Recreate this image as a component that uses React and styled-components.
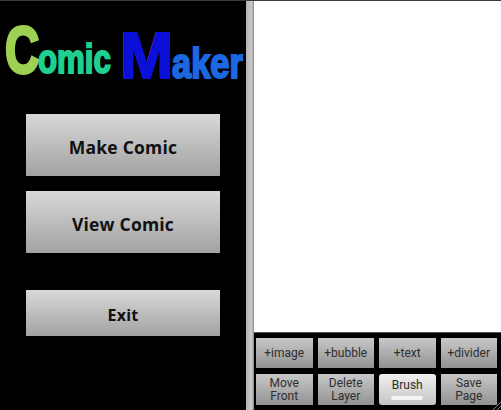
import React from 'react';
import styled, { createGlobalStyle } from 'styled-components';

const GlobalStyle = createGlobalStyle`
  html, body {
    margin: 0;
    padding: 0;
    background: #000;
  }
`;

const Screen = styled.div`
  display: flex;
  width: 501px;
  height: 410px;
  overflow: hidden;
  box-sizing: border-box;
  border-top: 1px solid #3a3a3a;
  font-family: "Open Sans", "Noto Sans", sans-serif;
`;

const MenuPane = styled.div`
  width: 246px;
  flex-shrink: 0;
  background: #000;
  display: flex;
  flex-direction: column;
`;

const Logo = styled.div`
  height: 112px;
  padding-left: 5px;
  padding-top: 16px;
  box-sizing: border-box;
  display: flex;
  align-items: baseline;
  font-family: "Liberation Sans", Arial, sans-serif;
  font-weight: 700;
  line-height: 1;
  white-space: nowrap;
`;

const Letter = styled.span`
  display: inline-block;
  width: ${p => p.w}px;
  font-size: ${p => p.size}px;
  color: ${p => p.color};
  -webkit-text-stroke: ${p => p.stroke}px ${p => p.color};
  text-shadow: ${p => p.shadow || 'none'};
  transform: scaleX(${p => p.sx || 1});
  transform-origin: left center;
  position: relative;
  top: ${p => p.drop || 0}px;
`;

const MenuButton = styled.div`
  margin: ${p => p.top}px 26px 0;
  height: ${p => p.h}px;
  box-sizing: border-box;
  padding-top: 3px;
  display: flex;
  align-items: center;
  justify-content: center;
  background: linear-gradient(#d8d8d8, #a2a2a2);
  color: #111;
  font-size: ${p => p.fs}px;
  font-weight: 700;
  letter-spacing: 0.2px;
`;

const Splitter = styled.div`
  width: 8px;
  flex-shrink: 0;
  background: linear-gradient(90deg, #b4b4b4, #c8c8c8 70%, #888);
`;

const EditorPane = styled.div`
  flex: 1;
  display: flex;
  flex-direction: column;
  position: relative;
`;

const Canvas = styled.div`
  flex: 1;
  background: #fff;
`;

const Toolbar = styled.div`
  height: 78px;
  box-sizing: border-box;
  background: #000;
  border-top: 1px solid #555;
  padding: 5px 4px 5px 2px;
  display: grid;
  grid-template-columns: repeat(4, 56.5px);
  grid-template-rows: 30px 31px;
  column-gap: 5px;
  row-gap: 6px;
`;

const ToolButton = styled.div`
  display: flex;
  flex-direction: column;
  align-items: center;
  justify-content: center;
  text-align: center;
  background: ${p => p.active
    ? 'linear-gradient(#f0f0f0, #c4c4c4)'
    : 'linear-gradient(#c8c8c8, #929292)'};
  border-radius: ${p => p.active ? '3px' : '0'};
  color: #2e2e2e;
  font-family: Roboto, "Open Sans", sans-serif;
  font-size: 12px;
`;

const ToolLine = styled.span`
  display: block;
  height: 12.5px;
  line-height: 12.5px;
`;

const ToggleBar = styled.div`
  width: 32px;
  height: 4px;
  margin-top: 4px;
  border-radius: 2px;
  background: #f4f4f4;
`;

const Grip = styled.svg`
  position: absolute;
  right: 0;
  bottom: 0;
`;

const TOOLS = [
  { label: ['+image'] },
  { label: ['+bubble'] },
  { label: ['+text'] },
  { label: ['+divider'] },
  { label: ['Move', 'Front'] },
  { label: ['Delete', 'Layer'] },
  { label: ['Brush'], active: true },
  { label: ['Save', 'Page'] },
];

const App = () => (
  <Screen>
    <GlobalStyle />
    <MenuPane>
      <Logo>
        <Letter w={33} size={66} sx={0.72} color="#9ed152" stroke={3} shadow="-1px -1px 0 #c9704f">C</Letter>
        <Letter w={82} size={40} sx={0.78} color="#1fcf8f" stroke={2}>omic</Letter>
        <Letter w={52} size={64} color="#0a10d8" stroke={2} drop={5} shadow="-1px -1px 0 #c040c0">M</Letter>
        <Letter w={70} size={42} sx={0.82} color="#1c68e0" stroke={2} drop={5}>aker</Letter>
      </Logo>
      <MenuButton top={1} h={62} fs={17.5}>Make Comic</MenuButton>
      <MenuButton top={15} h={62} fs={17.5}>View Comic</MenuButton>
      <MenuButton top={37} h={46} fs={16}>Exit</MenuButton>
    </MenuPane>
    <Splitter />
    <EditorPane>
      <Canvas />
      <Toolbar>
        {TOOLS.map(tool => (
          <ToolButton key={tool.label.join(' ')} active={tool.active}>
            {tool.label.map(line => <ToolLine key={line}>{line}</ToolLine>)}
            {tool.active && <ToggleBar />}
          </ToolButton>
        ))}
      </Toolbar>
      <Grip width="10" height="10" viewBox="0 0 10 10">
        <path d="M2 10 L10 2 M6 10 L10 6" stroke="#888" strokeWidth="1" />
      </Grip>
    </EditorPane>
  </Screen>
);

export default App;
